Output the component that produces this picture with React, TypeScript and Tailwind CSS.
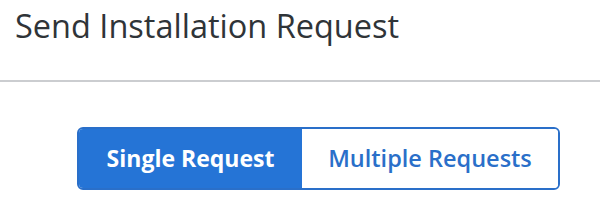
export default function App() {
  return (
    <div className="w-[600px] h-[207px] bg-white" style={{ fontFamily: '"Open Sans", sans-serif' }}>
      <div className="h-[82px] border-b-2 border-[#cbcdd0] pl-[15px] pt-[4px]">
        <h1 className="text-[32.5px] leading-[44px] text-[#2f3438]">Send Installation Request</h1>
      </div>
      <div className="pt-[45px] pl-[77px]">
        <div className="flex h-[63px] w-[483px] rounded-[6px] overflow-hidden border-2 border-[#2a6fc9]">
          <button className="w-[223px] bg-[#2574d6] text-white text-[23px] font-bold">Single Request</button>
          <button className="flex-1 bg-white text-[#2a6fc9] text-[23.5px] font-semibold">Multiple Requests</button>
        </div>
      </div>
    </div>
  );
}
